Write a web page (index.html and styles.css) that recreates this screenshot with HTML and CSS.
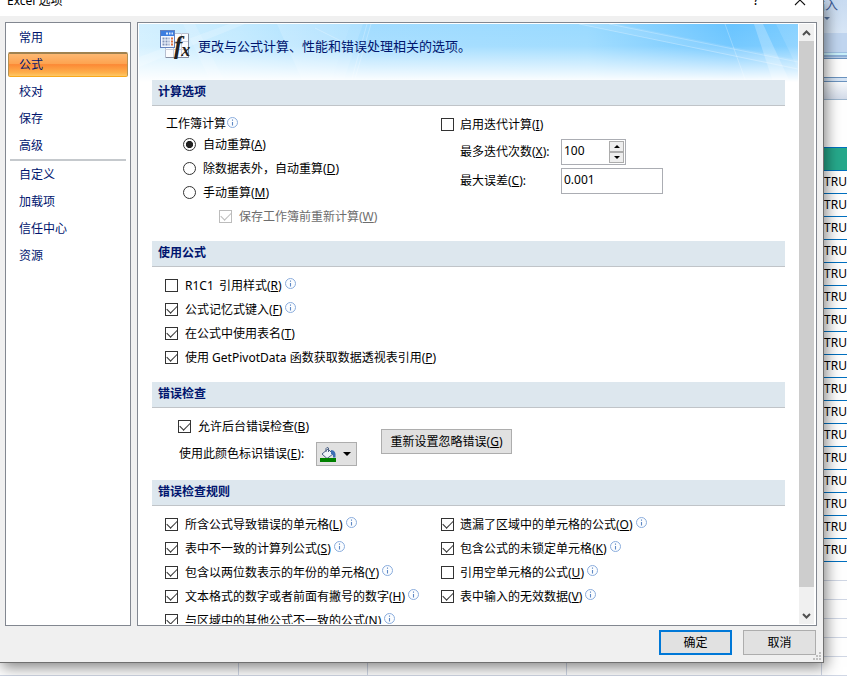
FILE: index.html
```
<!DOCTYPE html>
<html lang="zh-CN">
<head>
  <meta charset="UTF-8">
  <meta name="viewport" content="width=device-width, initial-scale=1.0">
  <title>Excel 选项</title>
  <link rel="stylesheet" href="styles.css">
</head>
<body>
  <!-- Shared icons -->
  <svg class="defs" width="0" height="0">
    <symbol id="info" viewBox="0 0 11 11">
      <circle cx="5.5" cy="5.5" r="5" fill="#fbfdff" stroke="#8aacdc"/>
      <path d="M5.5 2.500v1.300M5.500 5v3.500" stroke="#5f88c4" stroke-width="1.1"/>
    </symbol>
  </svg>

  <!-- Worksheet behind the dialog -->
  <div class="sheet">
    <div class="sheet-edge">
      <div class="ribbon"><span>插入</span><i class="ribbon-arrow"></i></div>
      <div class="ribbon-group"></div>
      <div class="ribbon-bottom"></div>
      <div class="formula-bar"></div>
      <div class="bar-gap"></div>
      <div class="column-head"></div>
      <div class="blank"></div>
      <div class="table-head"></div>
      <div id="table-rows"></div>
      <div id="empty-rows"></div>
    </div>
    <div class="sheet-bottom">
      <span class="cell-a"></span><span class="cell-b"></span><span class="cell-c"></span><span class="cell-d"></span>
    </div>
  </div>

  <div class="dialog">
    <div class="titlebar">
      <span class="title">Excel 选项</span>
      <span class="help">?</span>
      <svg class="close" width="12" height="12" viewBox="0 0 12 12"><path d="M1 1l10 10M11 1L1 11" stroke="#111" stroke-width="1.1"/></svg>
    </div>

    <div class="main">
      <ul class="nav">
        <li>常用</li>
        <li class="active">公式</li>
        <li>校对</li>
        <li>保存</li>
        <li>高级</li>
        <li class="divider"></li>
        <li>自定义</li>
        <li>加载项</li>
        <li>信任中心</li>
        <li>资源</li>
      </ul>

      <div class="panel">
        <div class="content">
          <div class="banner">
            <svg class="banner-art" width="659" height="58" viewBox="0 0 659 58">
              <defs>
                <linearGradient id="sky" x1="0" x2="1" y1="0" y2="0">
                  <stop offset="0" stop-color="#d3f0ff"/>
                  <stop offset=".15" stop-color="#c3eaff"/>
                  <stop offset=".35" stop-color="#a2dcff"/>
                  <stop offset=".68" stop-color="#9adaff"/>
                  <stop offset=".9" stop-color="#69c4ff"/>
                  <stop offset="1" stop-color="#7accff"/>
                </linearGradient>
                <linearGradient id="fade" x1="0" x2="0" y1="0" y2="1">
                  <stop offset="0" stop-color="#fff" stop-opacity="0"/>
                  <stop offset=".38" stop-color="#fff" stop-opacity=".08"/>
                  <stop offset="1" stop-color="#fff"/>
                </linearGradient>
              </defs>
              <rect width="659" height="58" fill="url(#sky)"/>
              <g fill="#fff">
                <path d="M138 0h74l-20 58h-28z" opacity=".16"/>
                <path d="M212 0h12l-20 58h-12z" opacity=".12"/>
                <path d="M0 33L90 0h16L0 43z" opacity=".2"/>
                <path d="M44 0h12l30 58H72z" opacity=".15"/>
                <path d="M615 0h9l27 58h-17z" opacity=".24"/>
                <path d="M637 0h22v45z" opacity=".12"/>
                <path d="M440 0h38l181 36v10z" opacity=".1"/>
              </g>
              <g fill="none" stroke="#fff" opacity=".25">
                <path d="M228 0l-16 58M232 0l-17 58M586 0l21 58M440 0l219 45M470 0l189 38M176 4l50 25"/>
              </g>
              <rect width="659" height="58" fill="url(#fade)"/>
            </svg>
            <svg class="banner-icon" width="31" height="32" viewBox="0 0 31 32">
              <rect x="5.5" y="4.500" width="23" height="24" fill="#fbfcfe" stroke="#b7bfd0"/>
              <path d="M13.500 4v24M21.500 4v24M5 12.500h24M5 20.500h24" stroke="#c9cfdd"/>
              <path d="M28.500 5v23.500H6" fill="none" stroke="#848da0"/>
              <rect x=".5" y="1.500" width="14" height="17" fill="#f3f7ff" stroke="#6482bd"/>
              <rect x="1" y="2" width="13" height="5" fill="#3c7de0"/>
              <path d="M6 4.500h2M9 4.500h1.500M11.500 4.500h1.500" stroke="#dcecff" stroke-width="2"/>
              <path d="M2.500 9.500h7M2.500 12.500h7M2.500 15.500h7" stroke="#8193b8" stroke-width="2" stroke-dasharray="2 1"/>
              <path d="M11 9.500h2M11 12.500h2M11 15.500h2" stroke="#e0733f" stroke-width="2"/>
              <text x="14" y="25" class="fx">f<tspan class="fx-small" dx="-1" dy="2">x</tspan></text>
            </svg>
            <span class="banner-text">更改与公式计算、性能和错误处理相关的选项。</span>
          </div>

          <h2>计算选项</h2>
          <div class="section calc">
            <div class="col">
              <div class="row caption">工作簿计算<svg class="info"><use href="#info"/></svg></div>
              <label class="row indent"><i class="radio on"></i><span>自动重算(<u>A</u>)</span></label>
              <label class="row indent"><i class="radio"></i><span>除数据表外，自动重算(<u>D</u>)</span></label>
              <label class="row indent"><i class="radio"></i><span>手动重算(<u>M</u>)</span></label>
              <label class="row indent-more disabled"><i class="check on"></i><span>保存工作簿前重新计算(<u>W</u>)</span></label>
            </div>
            <div class="col second iterate">
              <label class="row"><i class="check"></i><span>启用迭代计算(<u>I</u>)</span></label>
              <div class="field">
                <span class="field-name">最多迭代次数(<u>X</u>):</span>
                <div class="box spinner">
                  <span>100</span>
                  <div class="spin-buttons"><i class="up"></i><i class="down"></i></div>
                </div>
              </div>
              <div class="field">
                <span class="field-name">最大误差(<u>C</u>):</span>
                <div class="box error-value"><span>0.001</span></div>
              </div>
            </div>
          </div>

          <h2>使用公式</h2>
          <div class="section formulas">
            <div class="col">
              <label class="row"><i class="check"></i><span class="spaced">R1C1 引用样式(<u>R</u>)</span><svg class="info"><use href="#info"/></svg></label>
              <label class="row"><i class="check on"></i><span>公式记忆式键入(<u>F</u>)</span><svg class="info"><use href="#info"/></svg></label>
              <label class="row"><i class="check on"></i><span>在公式中使用表名(<u>T</u>)</span></label>
              <label class="row"><i class="check on"></i><span>使用 GetPivotData 函数获取数据透视表引用(<u>P</u>)</span></label>
            </div>
          </div>

          <h2>错误检查</h2>
          <div class="section errors">
            <div class="error-left">
              <label class="row"><i class="check on"></i><span>允许后台错误检查(<u>B</u>)</span></label>
              <div class="color-row">
                <span>使用此颜色标识错误(<u>E</u>):</span>
                <div class="color-button">
                  <svg width="17" height="16" viewBox="0 0 17 16">
                    <path d="M2 8l6-5 5 5-6 4.500z" fill="#eef3fa" stroke="#4d6286"/>
                    <path d="M6 6V2.500Q7 .5 8.500 2v4" fill="none" stroke="#4d6286"/>
                    <path d="M11 4q5.500 0 4.500 7.500h-2.500Q13.500 8 11 8z" fill="#3c6eb4"/>
                    <rect x="0" y="12" width="16" height="4" fill="#008000"/>
                  </svg>
                  <i class="down"></i>
                </div>
              </div>
            </div>
            <div class="button reset">重新设置忽略错误(<u>G</u>)</div>
          </div>

          <h2>错误检查规则</h2>
          <div class="section rules">
            <div class="col">
              <label class="row"><i class="check on"></i><span>所含公式导致错误的单元格(<u>L</u>)</span><svg class="info"><use href="#info"/></svg></label>
              <label class="row"><i class="check on"></i><span>表中不一致的计算列公式(<u>S</u>)</span><svg class="info"><use href="#info"/></svg></label>
              <label class="row"><i class="check on"></i><span>包含以两位数表示的年份的单元格(<u>Y</u>)</span><svg class="info"><use href="#info"/></svg></label>
              <label class="row"><i class="check on"></i><span>文本格式的数字或者前面有撇号的数字(<u>H</u>)</span><svg class="info"><use href="#info"/></svg></label>
              <label class="row"><i class="check on"></i><span>与区域中的其他公式不一致的公式(<u>N</u>)</span><svg class="info"><use href="#info"/></svg></label>
            </div>
            <div class="col second">
              <label class="row"><i class="check on"></i><span>遗漏了区域中的单元格的公式(<u>O</u>)</span><svg class="info"><use href="#info"/></svg></label>
              <label class="row"><i class="check on"></i><span>包含公式的未锁定单元格(<u>K</u>)</span><svg class="info"><use href="#info"/></svg></label>
              <label class="row"><i class="check"></i><span>引用空单元格的公式(<u>U</u>)</span><svg class="info"><use href="#info"/></svg></label>
              <label class="row"><i class="check on"></i><span>表中输入的无效数据(<u>V</u>)</span><svg class="info"><use href="#info"/></svg></label>
            </div>
          </div>
        </div>

        <div class="scrollbar">
          <svg width="15" height="17" viewBox="0 0 15 17"><path d="M4 11l3.500-3.500L11 11" fill="none" stroke="#505050" stroke-width="2"/></svg>
          <div class="thumb"></div>
          <svg class="arrow-down" width="15" height="17" viewBox="0 0 15 17"><path d="M4 7l3.500 3.500L11 7" fill="none" stroke="#505050" stroke-width="2"/></svg>
        </div>
      </div>
    </div>

    <div class="footer">
      <div class="button ok">确定</div>
      <div class="button">取消</div>
    </div>
    <svg class="grip" width="8" height="8" viewBox="0 0 8 8"><path d="M6 0h2v2H6zM3 3h2v2H3zM6 3h2v2H6zM0 6h2v2H0zM3 6h2v2H3zM6 6h2v2H6z" fill="#bfbfbf"/></svg>
  </div>

  <script>
    // Fill the visible edge of the worksheet
    document.getElementById('table-rows').innerHTML = '<div class="table-row">TRUE</div>'.repeat(17);
    document.getElementById('empty-rows').innerHTML = '<div class="empty-row"></div>'.repeat(6);
  </script>
</body>
</html>
```
FILE: styles.css
```
* {
  box-sizing: border-box;
}

body {
  margin: 0;
  width: 847px;
  height: 676px;
  overflow: hidden;
  position: relative;
  background-color: #fff;
  color: #000;
  font-family: "Noto Sans", "Noto Sans CJK SC", sans-serif;
  font-size: 12px;
}

i {
  display: block;
  flex: none;
}

svg {
  display: block;
  flex: none;
}

u {
  text-underline-offset: 1px;
  text-decoration-thickness: 1px;
}

.defs {
  position: absolute;
}

/* Worksheet */
.sheet {
  position: relative;
  height: 676px;
}

.sheet-edge {
  margin-left: 821px;
  height: 676px;
  overflow: hidden;
  border-left: 1px solid #c5cddd;
}

.ribbon {
  height: 33px;
  background: linear-gradient(#c8dbf1, #d9e7f7);
  color: #3c5a96;
  font-size: 13px;
  line-height: 8px;
}

.ribbon span {
  display: block;
  height: 11px;
  width: 25px;
  margin-left: -10px;
  white-space: nowrap;
}

.ribbon-arrow {
  width: 0;
  margin: 6px 0 0 2px;
  border: 3px solid transparent;
  border-top-color: #56749f;
  border-bottom: 0;
}

.ribbon-group {
  height: 20px;
  background-color: #c1d6f0;
  border-bottom: 1px solid #9fc0e2;
}

.ribbon-bottom {
  height: 6px;
  background: linear-gradient(#c9f0fa 0 2px, #8eb1d8 2px 4px, #b8cde8 4px);
  border-bottom: 1px solid #6b93bf;
}

.formula-bar {
  height: 19px;
  border-bottom: 1px solid #6b93bf;
}

.bar-gap {
  height: 4px;
  background-color: #d5e4f5;
  border-bottom: 1px solid #6b93bf;
}

.column-head {
  height: 18px;
  background: linear-gradient(#f8fafc, #d3dbe9);
  border-bottom: 1px solid #9eb6ce;
}

.blank {
  height: 47px;
}

.table-head {
  height: 24px;
  background-color: #26a98b;
  border-top: 1px solid #0070c0;
  border-bottom: 1px solid #0070c0;
}

.table-row {
  height: 23px;
  line-height: 21px;
  padding-left: 2px;
  border-bottom: 1px solid #0070c0;
}

.empty-row {
  height: 19px;
  border-bottom: 1px solid #d0d7e5;
}

.sheet-bottom {
  position: absolute;
  left: 0;
  bottom: 0;
  display: flex;
  height: 13px;
  border-bottom: 1px solid #d0d7e5;
}

.sheet-bottom span {
  border-right: 1px solid #d0d7e5;
}

.cell-a {
  width: 239px;
}

.cell-b {
  width: 129px;
}

.cell-c {
  width: 199px;
}

.cell-d {
  width: 255px;
}

/* Dialog window */
.dialog {
  position: absolute;
  left: 0;
  top: 0;
  width: 824px;
  height: 663px;
  background-color: #f0f0f0;
  border-right: 1px solid #707070;
  border-bottom: 1px solid #707070;
  box-shadow: 2px 4px 14px rgba(0, 0, 0, 0.5);
}

.titlebar {
  display: flex;
  height: 16px;
  padding-left: 7px;
  background-color: #fff;
  overflow: hidden;
}

.titlebar span {
  height: 16px;
  line-height: 16px;
  margin-top: -7px;
}

.title {
  flex: 1;
}

.titlebar .help {
  width: 41px;
  margin-top: -8px;
  font-size: 14px;
}

.close {
  margin: -6px 17px 0 0;
}

.main {
  display: flex;
  gap: 6px;
  padding: 6px 0 0 5px;
}

/* Category list */
.nav {
  list-style: none;
  width: 126px;
  height: 604px;
  margin: 0;
  padding: 1px 2px;
  background-color: #fff;
  border: 1px solid #828790;
  color: #00156e;
}

.nav li {
  height: 25px;
  margin: 1px 0;
  padding-left: 10px;
  line-height: 26px;
  border: 1px solid transparent;
  border-width: 0 1px;
}

.nav li + li {
  margin-top: 2px;
}

.nav .active {
  border: 1px solid #f9a91c;
  border-top: 2px solid #a08250;
  border-left-color: #b59254;
  border-right-color: #b59254;
  border-radius: 2px;
  line-height: 22px;
  background: linear-gradient(#fdb872, #fda350 45%, #fc8936 48%, #feb04b 85%, #fec865);
}

.nav .divider {
  height: 2px;
  margin: 0 2px;
  padding: 0;
  background-color: #c5c9cd;
  border: 0;
}

.nav .divider + li {
  margin-top: 1px;
}

/* Options panel */
.panel {
  display: flex;
  width: 680px;
  height: 604px;
  padding: 1px;
  background-color: #fff;
  border: 1px solid #828790;
}

.content {
  width: 660px;
  height: 600px;
  overflow: hidden;
}

.banner {
  position: relative;
  display: flex;
  height: 56px;
  padding: 5px 0 0 21px;
}

.banner-art {
  position: absolute;
  left: 0;
  top: 0;
}

.banner-icon {
  position: relative;
}

.fx {
  font: italic bold 25px "Liberation Serif", serif;
  fill: #222;
}

.fx-small {
  font-size: 18px;
}

.banner-text {
  position: relative;
  margin-left: 7px;
  color: #00156e;
  font-size: 13px;
  line-height: 34px;
}

h2 {
  position: relative;
  width: 633px;
  height: 26px;
  margin: 0 0 0 13px;
  padding-left: 6px;
  background-color: #dde7ee;
  border-bottom: 1px solid #c0c4c8;
  color: #00156e;
  font-size: 12px;
  line-height: 24px;
}

.section {
  display: flex;
  margin-left: 13px;
  padding: 6px 0 0 13px;
}

.calc {
  height: 135px;
  padding-top: 5px;
}

.formulas {
  height: 115px;
}

.errors {
  height: 72px;
}

.rules {
  height: 160px;
}

.col {
  width: 276px;
  white-space: nowrap;
}

.row {
  display: flex;
  height: 24px;
  line-height: 26px;
}

.caption {
  height: 21px;
  padding-left: 1px;
}

.indent {
  padding-left: 18px;
}

.indent-more {
  padding-left: 54px;
}

.check,
.radio {
  width: 13px;
  height: 13px;
  margin: 6px 7px 0 0;
  border: 1px solid #333;
  background-color: #fff;
}

.second .check {
  margin-right: 6px;
}

.radio {
  border-radius: 50%;
}

.radio.on {
  background: radial-gradient(circle, #222 3.2px, #fff 4px);
}

/* Tick mark */
.check.on::after {
  content: "";
  display: block;
  width: 9px;
  height: 5px;
  margin: 1px 0 0 1px;
  border: solid #333;
  border-width: 0 0 1.5px 1.5px;
  transform: rotate(-45deg);
}

.disabled {
  color: #6d6d6d;
}

.disabled .check,
.disabled .check.on::after {
  border-color: #bcbcbc;
}

.spaced {
  word-spacing: 2px;
}

.info {
  width: 11px;
  height: 11px;
  margin: 5px 0 0 3px;
}

.caption .info {
  margin: 6px 0 0 1px;
}

.iterate {
  padding-top: 1px;
}

.field {
  display: flex;
  height: 26px;
  margin: 3px 0 0 19px;
  line-height: 26px;
}

.field-name {
  width: 101px;
}

.box {
  display: flex;
  justify-content: space-between;
  height: 26px;
  padding: 1px 1px 1px 2px;
  border: 1px solid #abadb3;
  line-height: 20px;
}

.spinner {
  width: 65px;
}

.error-value {
  width: 102px;
}

.spin-buttons {
  width: 15px;
}

.spin-buttons i {
  display: flex;
  align-items: center;
  justify-content: center;
  height: 11px;
  border: 1px solid #acacac;
  background-color: #eee;
}

.up::before,
.down::before {
  content: "";
  display: block;
  border: 3px solid transparent;
  border-top-width: 0;
  border-bottom-color: #000;
}

.down::before {
  border-top: 3px solid #000;
  border-bottom: 0;
}

/* Error checking */
.error-left {
  width: 216px;
  padding-left: 13px;
}

.color-row {
  display: flex;
  justify-content: space-between;
  width: 179px;
  height: 24px;
  margin-top: 4px;
  padding-left: 1px;
  line-height: 24px;
  white-space: nowrap;
}

.color-button {
  display: flex;
  align-items: center;
  gap: 6px;
  width: 41px;
  height: 24px;
  padding-left: 3px;
  border: 1px solid #adadad;
  background-color: #e1e1e1;
}

.color-button .down::before {
  border-width: 4px 4px 0;
}

.button {
  width: 73px;
  height: 25px;
  border: 1px solid #adadad;
  background-color: #e1e1e1;
  line-height: 24px;
  text-align: center;
  white-space: nowrap;
}

.reset {
  width: 131px;
  margin-top: 15px;
}

.ok {
  border: 2px solid #0078d7;
  line-height: 22px;
}

/* Scrollbar */
.scrollbar {
  width: 15px;
  height: 600px;
  background-color: #f0f0f0;
}

.thumb {
  height: 546px;
  background-color: #cdcdcd;
}

.arrow-down {
  margin-top: 20px;
}

.footer {
  display: flex;
  justify-content: flex-end;
  gap: 11px;
  padding: 4px 7px 0 0;
}

.grip {
  position: absolute;
  right: 2px;
  bottom: 2px;
}
```
